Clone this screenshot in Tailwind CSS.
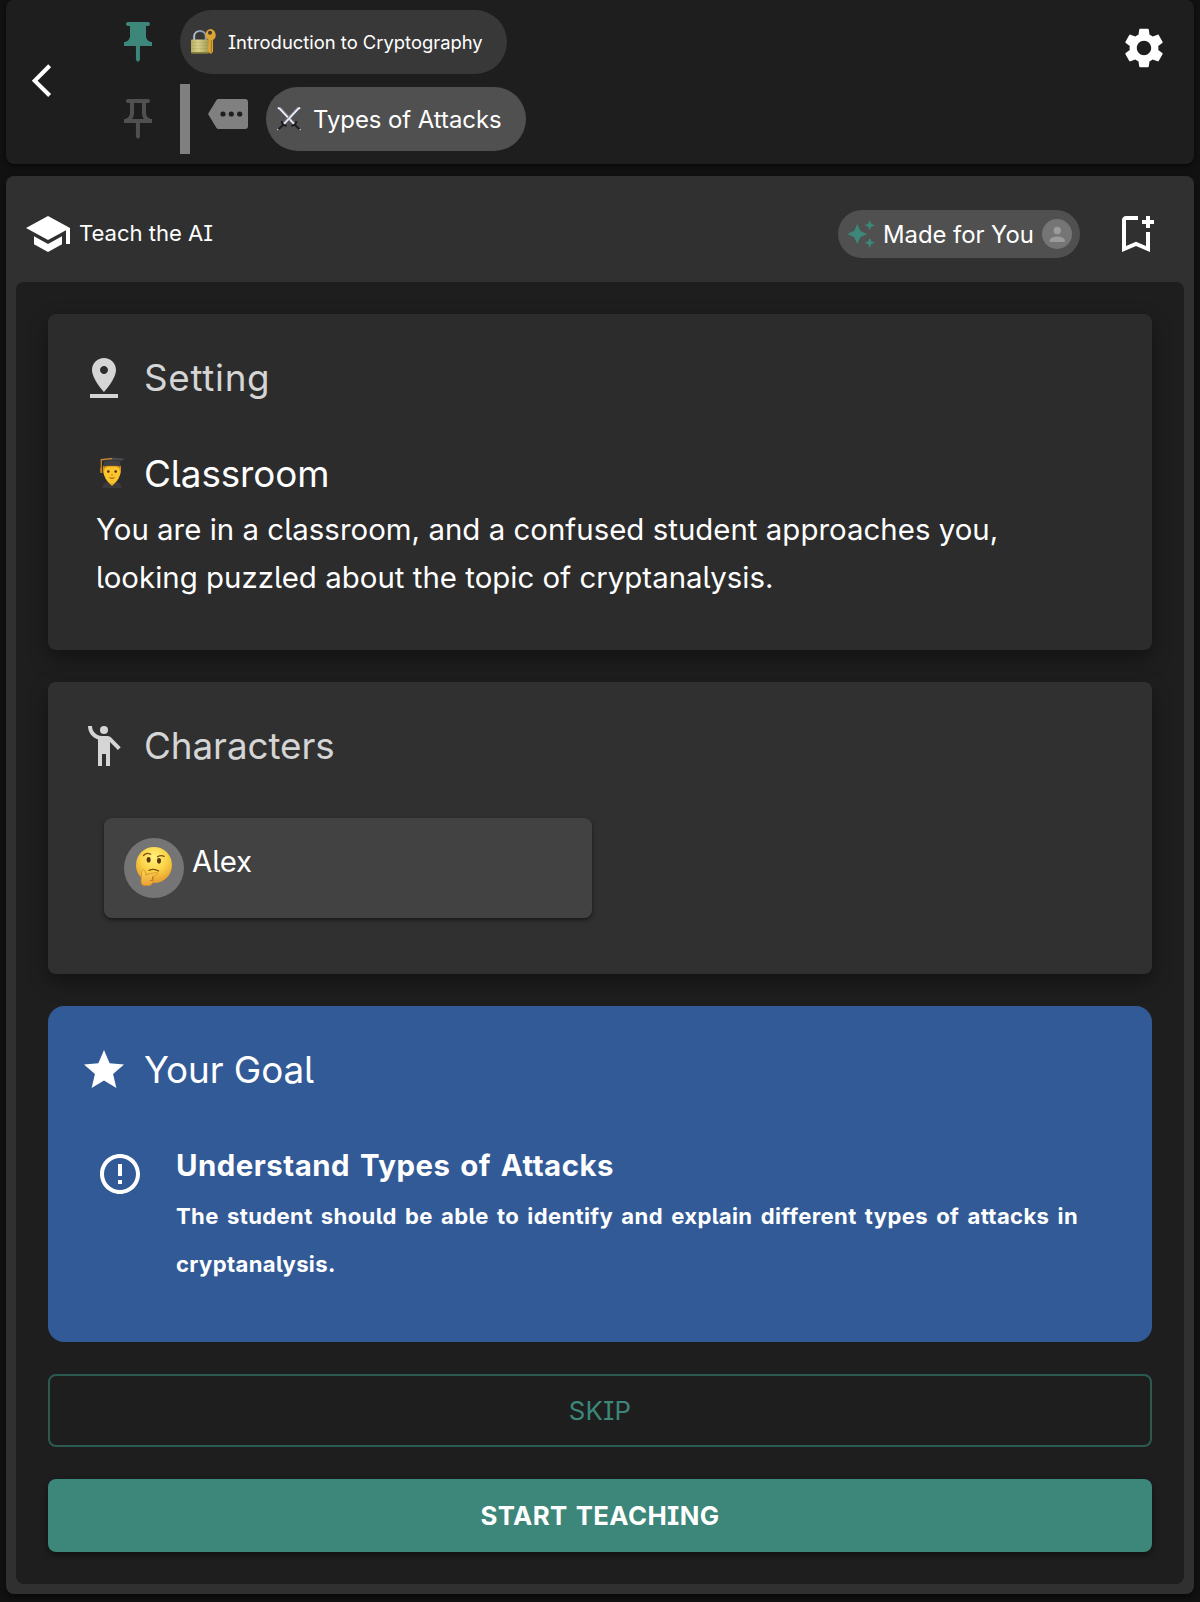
<!DOCTYPE html>
<html lang="en">
<head>
<meta charset="utf-8">
<title>Teach the AI</title>
<script src="https://cdn.jsdelivr.net/npm/@tailwindcss/browser@4"></script>
</head>
<body class="h-[1602px] overflow-hidden bg-[#111111] px-1.5 text-white font-['Inter','Liberation_Sans',sans-serif] [font-feature-settings:'cv05','cv08']">

<header class="flex h-[164px] rounded-lg bg-[#1e1e1e] pl-4 pr-[26px] shadow-[0_2px_4px_rgba(0,0,0,0.5)]">
  <svg class="mt-[61px] size-[39.3px] shrink-0" viewBox="0 0 24 24" fill="#fff"><path d="M17.77 3.77 16 2 6 12l10 10 1.77-1.77L9.54 12z"/></svg>
  <div class="ml-[52.7px] flex flex-col gap-2.5 pt-2.5">
    <div class="flex h-16 items-center">
      <svg class="size-12" viewBox="0 0 24 24" fill="#3c877a"><path d="M16 9V4h1c.55 0 1-.45 1-1s-.45-1-1-1H7c-.55 0-1 .45-1 1s.45 1 1 1h1v5c0 1.66-1.34 3-3 3v2h5.97v7l1 1 1-1v-7H19v-2c-1.66 0-3-1.34-3-3"/></svg>
      <div class="ml-[18px] flex h-16 w-[327px] items-center rounded-full bg-[#383838] pl-[11px]">
        <svg class="size-[26px]" viewBox="0 0 26 26">
          <defs>
            <linearGradient id="lockBody" x1="0" x2="1" y1="0" y2="0"><stop offset="0" stop-color="#b5ad62"/><stop offset=".4" stop-color="#d8d18e"/><stop offset="1" stop-color="#a1984d"/></linearGradient>
          </defs>
          <path d="M3.2 12V7.6C3.2 4 5.8 2 9 2s5.8 2 5.8 5.6V12" fill="none" stroke="#8f9fb4" stroke-width="2"/>
          <path d="M3 12V7.6C3 4.6 4.6 3 6.6 2.4" fill="none" stroke="#c5d0de" stroke-width="1"/>
          <rect x="0" y="10.6" width="18" height="13.6" rx="1" fill="url(#lockBody)"/>
          <path d="M0 13.6h18M0 16.6h18M0 19.6h18" stroke="#8f8748" stroke-opacity=".3" stroke-width=".7"/>
          <path d="M0 23h18v.4a1 1 0 0 1-1 1H1a1 1 0 0 1-1-1z" fill="#8a803d"/>
          <path d="M19 0a6 6 0 0 1 3 11v11.8L20 25l-2.4-2v-1.6l-1.4-1 1.4-1.2-1.4-1.2 1.4-1.3V11A6 6 0 0 1 19 0" fill="#dba534"/>
          <path d="M20.4 11v12.6" stroke="#a8741c" stroke-width="1"/>
          <circle cx="19" cy="3.7" r="2" fill="#423a28"/>
        </svg>
        <span class="ml-[11px] whitespace-nowrap pt-px text-[18.4px]">Introduction to Cryptography</span>
      </div>
    </div>
    <div class="flex h-[70px] items-center">
      <svg class="size-12" viewBox="0 0 24 24" fill="#505050"><path d="M14 4v5c0 1.12.37 2.16 1 3H9c.65-.86 1-1.9 1-3V4zm3-2H7c-.55 0-1 .45-1 1s.45 1 1 1h1v5c0 1.66-1.34 3-3 3v2h5.97v7l1 1 1-1v-7H19v-2c-1.66 0-3-1.34-3-3V4h1c.55 0 1-.45 1-1s-.45-1-1-1"/></svg>
      <div class="ml-[18px] h-full w-2.5 bg-[#808080]"></div>
      <svg class="mb-2.5 ml-[18px] h-[30px] w-10" viewBox="0 0 40 30"><path d="M10.5 0H37a3 3 0 0 1 3 3v24a3 3 0 0 1-3 3H10.500a2.500 2.500 0 0 1-2-1L0 15 8.500 1a2.500 2.500 0 0 1 2-1z" fill="#808080"/><g fill="#1e1e1e"><circle cx="15" cy="15" r="2.6"/><circle cx="23.3" cy="15" r="2.6"/><circle cx="31.7" cy="15" r="2.6"/></g></svg>
      <div class="ml-[18px] flex h-16 w-[260px] items-center rounded-full bg-[#505050] pl-[11px]">
        <svg class="h-6 w-6" viewBox="0 0 24 24">
          <g fill="none">
            <path d="m.8.8 2.400.7L17.500 16.800" stroke="#8f7f8a" stroke-width="2.6"/>
            <path d="m.8.8 2 1L17 17" stroke="#e2f0fc" stroke-width="1.7"/>
            <path d="m23.200.8-2.400.7L6.500 16.800" stroke="#8f7f8a" stroke-width="2.6"/>
            <path d="m23.200.8-2 1L7 17" stroke="#e2f0fc" stroke-width="1.7"/>
            <path d="M4.500 14.300c.5 2 .8 3.800 5.200 4.600M19.500 14.300c-.5 2-.8 3.800-5.200 4.600" stroke="#15171a" stroke-width="1.9"/>
            <path d="m6.500 17.500-5 4.700M17.500 17.500l5 4.700" stroke="#1b1d20" stroke-width="1.9"/>
            <path d="m.4 22.200.9.9M23.600 22.200l-.9.9" stroke="#c9c9c9" stroke-width="1.2"/>
          </g>
        </svg>
        <span class="ml-3 whitespace-nowrap pt-0.5 text-[23.9px] tracking-[-0.03px]">Types of Attacks</span>
      </div>
    </div>
  </div>
  <svg class="ml-auto mt-6 size-12" viewBox="0 0 24 24" fill="#fff"><path d="M19.14 12.94c.04-.3.06-.61.06-.94 0-.32-.02-.64-.07-.94l2.03-1.58c.18-.14.23-.41.12-.61l-1.92-3.32c-.12-.22-.37-.29-.59-.22l-2.39.96c-.5-.38-1.03-.7-1.62-.94l-.36-2.54c-.04-.24-.24-.41-.48-.41h-3.84c-.24 0-.43.17-.47.41l-.36 2.54c-.59.24-1.13.57-1.62.94l-2.39-.96c-.22-.08-.47 0-.59.22L2.74 8.87c-.12.21-.08.47.12.61l2.03 1.58c-.05.3-.09.63-.09.94s.02.64.07.94l-2.03 1.58c-.18.14-.23.41-.12.61l1.92 3.32c.12.22.37.29.59.22l2.39-.96c.5.38 1.03.7 1.62.94l.36 2.54c.05.24.24.41.48.41h3.84c.24 0 .44-.17.47-.41l.36-2.54c.59-.24 1.13-.56 1.62-.94l2.39.96c.22.08.47 0 .59-.22l1.92-3.32c.12-.22.07-.47-.12-.61zM12 15.6c-1.98 0-3.6-1.62-3.6-3.6s1.62-3.6 3.6-3.6 3.6 1.62 3.6 3.6-1.62 3.6-3.6 3.6"/></svg>
</header>

<main class="mt-3 h-[1418px] rounded-lg bg-[#303030] px-2.5 shadow-[0_3px_5px_rgba(0,0,0,0.5)]">
  <div class="flex h-[106px] items-center pb-0 pl-2 pr-6 pt-2.5">
    <svg class="size-12" viewBox="0 0 24 24" fill="#fff"><path d="M5 13.18v4L12 21l7-3.82v-4L12 17zM12 3 1 9l11 6 9-4.91V17h2V9z"/></svg>
    <span class="ml-[7px] whitespace-nowrap text-[22.1px] tracking-[-0.03px]">Teach the AI</span>
    <div class="ml-auto flex h-12 w-[242px] items-center rounded-full bg-[#505050] pl-2">
      <svg class="size-[30px]" viewBox="0 0 24 24" fill="#3c877a"><path d="m19 9 1.250-2.750L23 5l-2.750-1.250L19 1l-1.250 2.750L15 5l2.750 1.250zm0 6-1.250 2.750L15 19l2.750 1.250L19 23l1.250-2.750L23 19l-2.750-1.250zm-7.500-5.500L9 4 6.500 9.500 1 12l5.500 2.500L9 20l2.500-5.500L17 12z"/></svg>
      <span class="ml-[7px] whitespace-nowrap pt-0.5 text-[23.9px] tracking-[-0.04px]">Made for You</span>
      <svg class="ml-auto mr-2 size-[30px] rounded-full bg-[#757575]" viewBox="0 0 30 30" fill="#9b9b9b"><circle cx="15.3" cy="11.5" r="3.7"/><path d="M7.800 23v-1.600c0-2.600 4.900-4 7.500-4s7.500 1.400 7.500 4V23z"/></svg>
    </div>
    <svg class="ml-8 size-12" viewBox="0 0 24 24" fill="#fff"><path d="M17 11v6.970l-5-2.140-5 2.140V5h6V3H7c-1.100 0-2 .9-2 2v16l7-3 7 3V11zm4-4h-2v2h-2V7h-2V5h2V3h2v2h2z"/></svg>
  </div>

  <div class="flex h-[1302px] flex-col rounded-lg bg-[#1e1e1e] p-8">
    <section class="h-[336px] shrink-0 rounded-lg bg-[#2c2c2c] px-8 pt-10 shadow-[0_8px_20px_rgba(0,0,0,0.4)]">
      <div class="flex h-12 items-center gap-4 text-[#d5d5d5]">
        <svg class="size-12" viewBox="0 0 24 24" fill="currentColor"><path d="M18 8c0-3.310-2.690-6-6-6S6 4.690 6 8c0 4.500 6 11 6 11s6-6.500 6-11m-8 0c0-1.100.9-2 2-2s2 .9 2 2-.890 2-2 2c-1.100 0-2-.9-2-2M5 20v2h14v-2z"/></svg>
        <h2 class="text-[36.8px] tracking-[0.7px]">Setting</h2>
      </div>
      <div class="mt-12 flex h-12 items-center">
        <svg class="mb-0.5 ml-5 h-8 w-[26px]" viewBox="0 0 26 32">
          <path d="M2.500 31c.3-4 2.600-6.200 6.500-6.600h6c3.900.4 6.200 2.600 6.500 6.600z" fill="#3a3a3d"/>
          <path d="M9 21h6v5l-3 3-3-3z" fill="#e9a825"/>
          <path d="M3.500 9c-1 5 0 8.500 2 12.500 1.500 3 3.700 5 6.500 5s5-2 6.500-5c2-4 3-7.500 2-12.500z" fill="#fcc52d"/>
          <path d="M3.500 8.500c-.4 3-.3 5 .2 6.500l1-3.800L7.500 9.500h9l2.800 1.700 1 3.800c.5-1.500.6-3.500.2-6.500z" fill="#d18a17"/>
          <circle cx="8.300" cy="14.500" r="1.300" fill="#4a2d10"/><circle cx="15.700" cy="14.500" r="1.300" fill="#4a2d10"/>
          <path d="M9.500 20.700c1.600.8 3.400.8 5 0" stroke="#8e4b12" stroke-width="1" fill="none"/>
          <path d="M11.200 18h1.600" stroke="#b87312" stroke-width="1.200"/>
          <path d="M4 4.500c4-1.500 12-1.500 16 0v5c-4-1.400-12-1.400-16 0z" fill="#3f4043"/>
          <path d="M0 2.300 11 .5l14 1.200-4 2C16 2.600 8 2.600 3 4z" fill="#4b4c50"/>
          <path d="M12 1.600 1.300 2.600V15" stroke="#c48426" stroke-width="1.300" fill="none"/>
          <path d="M.3 11h2v5h-2z" fill="#c48426"/>
        </svg>
        <h3 class="ml-[18px] text-[36.8px] tracking-[-0.08px]">Classroom</h3>
      </div>
      <p class="ml-4 mt-2 whitespace-nowrap text-[29.4px] leading-[48px] tracking-[0.03px]">You are in a classroom, and a confused student approaches you,<br>looking puzzled about the topic of cryptanalysis.</p>
    </section>

    <section class="mt-8 h-[292px] shrink-0 rounded-lg bg-[#303030] px-8 pt-10 shadow-[0_8px_20px_rgba(0,0,0,0.4)]">
      <div class="flex h-12 items-center gap-4 text-[#d5d5d5]">
        <svg class="size-12" viewBox="0 0 24 24" fill="currentColor"><circle cx="12" cy="4" r="2"/><path d="M15.890 8.110C15.500 7.720 14.830 7 13.530 7h-2.540C8.240 6.990 6 4.750 6 2H4c0 3.160 2.110 5.840 5 6.710V22h2v-6h2v6h2V10.050L18.950 14l1.410-1.410z"/></svg>
        <h2 class="text-[36.8px] tracking-[-0.06px]">Characters</h2>
      </div>
      <div class="ml-6 mt-12 flex h-[100px] w-[488px] items-start rounded-lg bg-[#424242] p-5 shadow-[0_2px_4px_rgba(0,0,0,0.5)]">
        <div class="flex size-15 items-center justify-center rounded-full bg-[#757575]">
          <svg class="mb-1 h-[39px] w-9" viewBox="0 0 36 39">
            <defs>
              <radialGradient id="face" cx=".5" cy=".3" r=".72"><stop offset="0" stop-color="#fff27c"/><stop offset=".5" stop-color="#fbd548"/><stop offset="1" stop-color="#e5992c"/></radialGradient>
              <linearGradient id="hand" x1="0" y1="0" x2="0" y2="1"><stop offset="0" stop-color="#fbd65a"/><stop offset="1" stop-color="#e9a032"/></linearGradient>
            </defs>
            <circle cx="18" cy="18" r="18" fill="url(#face)"/>
            <ellipse cx="12.600" cy="12.700" rx="2" ry="2.800" fill="#5a3410"/><ellipse cx="23" cy="13.800" rx="2" ry="2.800" fill="#5a3410"/>
            <path d="M7.500 8.500c1.800-2 4.800-2.500 7.200-1.200M21.500 9.800c2-1.200 4.600-1.400 6.700-.500" stroke="#7d4d12" stroke-width="1.300" fill="none" stroke-linecap="round"/>
            <path d="M13 23.300c3-1.200 7-1.100 9.600.700" stroke="#7d4d12" stroke-width="1.300" fill="none" stroke-linecap="round"/>
            <path d="M7.500 23c1.500.3 2 2.500 2.300 5 3-1 7-2 10.800-2.400 1.500-.1 1.800 1.500.4 2.100l-4.500 2c1.600 1 1.600 2.400.8 3.500.3 1.400-.3 2.600-1.300 3.200-.5 1.500-2 2.300-4 2.300H9c-2.800 0-4-2-4-4.500 0-3 .5-4 .5-6.200s.3-5 2-5z" fill="url(#hand)" stroke="#cf8424" stroke-width=".7"/>
            <path d="M16.500 29.700v3M14 33.500l3-.4" stroke="#a8641a" stroke-width=".8" fill="none"/>
          </svg>
        </div>
        <span class="ml-2 text-[29.4px] leading-[47px] tracking-[-0.1px]">Alex</span>
      </div>
    </section>

    <section class="mt-8 h-[336px] shrink-0 rounded-2xl bg-[#325a96] px-8 pt-10">
      <div class="flex h-12 items-center gap-4">
        <svg class="size-12" viewBox="0 0 24 24" fill="#fff"><path d="m12 17.270 6.180 3.730-1.640-7.030L22 9.240l-7.190-.610L12 2 9.190 8.630 2 9.240l5.460 4.730L5.820 21z"/></svg>
        <h2 class="text-[36.8px] tracking-[-0.08px]">Your Goal</h2>
      </div>
      <div class="ml-4 mt-12 flex">
        <svg class="mt-2 size-12" viewBox="0 0 24 24" fill="#fff"><path d="M11 15h2v2h-2zm0-8h2v6h-2zm.990-5C6.470 2 2 6.480 2 12s4.470 10 9.990 10C17.520 22 22 17.520 22 12S17.520 2 11.990 2M12 20c-4.420 0-8-3.580-8-8s3.580-8 8-8 8 3.580 8 8-3.580 8-8 8"/></svg>
        <div class="ml-8 whitespace-nowrap font-bold">
          <h3 class="text-[29.4px] leading-[48px] tracking-[0.5px] [word-spacing:2.4px]">Understand Types of Attacks</h3>
          <p class="mt-0.5 text-[22.1px] leading-[48px] tracking-[0.35px] [word-spacing:2.67px]">The student should be able to identify and explain different types of attacks in<br>cryptanalysis.</p>
        </div>
      </div>
    </section>

    <button class="mt-8 h-[73px] shrink-0 rounded-lg border-2 border-[#2d5a50] pt-0.5 text-[25.8px] tracking-[0.2px] text-[#3c877a]">SKIP</button>
    <button class="mt-8 h-[73px] shrink-0 rounded-lg bg-[#3c877a] pt-0.5 text-[25.8px] font-bold tracking-[0.4px] shadow-[0_3px_6px_rgba(0,0,0,0.45)] [word-spacing:1.5px]">START TEACHING</button>
  </div>
</main>
</body>
</html>
